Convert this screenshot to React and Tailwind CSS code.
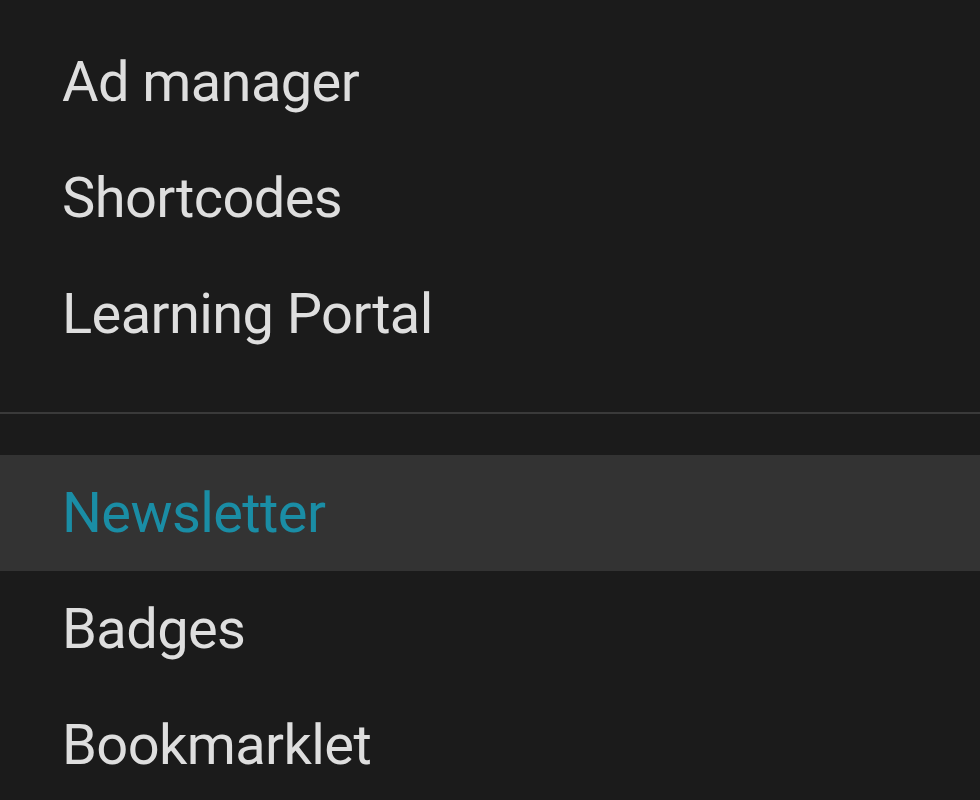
import React from 'react';

const topItems = ['Ad manager', 'Shortcodes', 'Learning Portal'];
const bottomItems = [
  { label: 'Newsletter', active: true },
  { label: 'Badges' },
  { label: 'Bookmarklet' },
];

function MenuItem({ label, active }) {
  return (
    <div
      className={
        'h-[116px] flex items-center pl-[62px] text-[56px] tracking-[-0.6px] ' +
        (active ? 'bg-[#333333] text-[#1a8da5]' : 'text-[#dedede]')
      }
    >
      {label}
    </div>
  );
}

export default function App() {
  return (
    <div
      className="w-[980px] h-[800px] overflow-hidden bg-[#1b1b1b] pt-[24px]"
      style={{ fontFamily: 'Roboto, "Liberation Sans", sans-serif' }}
    >
      {topItems.map((t) => (
        <MenuItem key={t} label={t} />
      ))}
      <div className="h-[40px]" />
      <div className="h-[2px] bg-[#3a3a3a]" />
      <div className="h-[41px]" />
      {bottomItems.map((it) => (
        <MenuItem key={it.label} label={it.label} active={it.active} />
      ))}
    </div>
  );
}
